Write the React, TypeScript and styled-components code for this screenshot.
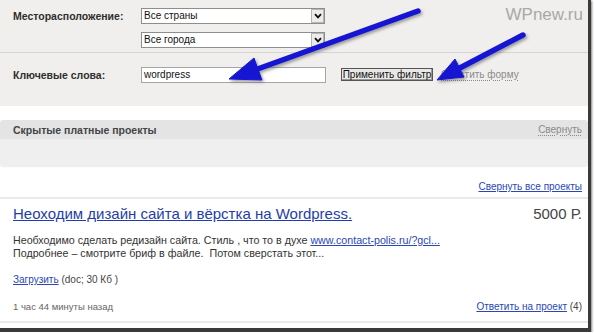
import styled, { createGlobalStyle } from 'styled-components';

const GlobalStyle = createGlobalStyle`
  body {
    margin: 0;
    background: #ffffff;
    font-family: 'Liberation Sans', Arial, sans-serif;
  }
`;

const ChevronIcon = () => (
  <svg width="8" height="6" viewBox="0 0 8 6">
    <path d="M1 1.2 L4 4.4 L7 1.2" fill="none" stroke="#111" strokeWidth="1.8" />
  </svg>
);

const Arrows = () => (
  <ArrowLayer width="588" height="330" viewBox="0 0 588 330">
    <defs>
      <filter id="shadow" x="-20%" y="-20%" width="140%" height="140%">
        <feDropShadow dx="1.5" dy="2" stdDeviation="1.5" floodColor="#555" floodOpacity="0.55" />
      </filter>
    </defs>
    <g filter="url(#shadow)" fill="#1414d2" stroke="#1414d2">
      <line x1="418" y1="11" x2="252" y2="71" strokeWidth="5.5" strokeLinecap="round" />
      <polygon points="229,79 254,58 262,80" strokeWidth="1" strokeLinejoin="round" />
      <line x1="523" y1="35" x2="456" y2="70" strokeWidth="5.5" strokeLinecap="round" />
      <polygon points="437,80 455,59 464,77" strokeWidth="1" strokeLinejoin="round" />
    </g>
  </ArrowLayer>
);

const App = () => {
  return (
    <>
      <GlobalStyle />
      <Frame>
        <Watermark>WPnew.ru</Watermark>
        <FilterPanel>
          <FilterGroup>
            <FilterRow>
              <Label>Месторасположение:</Label>
              <SelectBox>
                <span>Все страны</span>
                <SelectButton>
                  <ChevronIcon />
                </SelectButton>
              </SelectBox>
            </FilterRow>
            <FilterRow>
              <Label />
              <SelectBox>
                <span>Все города</span>
                <SelectButton>
                  <ChevronIcon />
                </SelectButton>
              </SelectBox>
            </FilterRow>
          </FilterGroup>
          <FilterGroup $divided>
            <FilterRow>
              <Label>Ключевые слова:</Label>
              <TextInput>wordpress</TextInput>
              <ApplyButton>Применить фильтр</ApplyButton>
              <GrayLink>Очистить форму</GrayLink>
            </FilterRow>
          </FilterGroup>
        </FilterPanel>

        <HiddenBox>
          <HiddenHeader>
            <HiddenTitle>Скрытые платные проекты</HiddenTitle>
            <GrayLink>Свернуть</GrayLink>
          </HiddenHeader>
          <HiddenBody />
        </HiddenBox>

        <CollapseRow>
          <BlueLink>Свернуть все проекты</BlueLink>
        </CollapseRow>

        <ProjectCard>
          <ProjectHead>
            <ProjectTitle>Неоходим дизайн сайта и вёрстка на Wordpress.</ProjectTitle>
            <Price>5000 Р.</Price>
          </ProjectHead>
          <Description>
            Необходимо сделать редизайн сайта. Стиль , что то в духе{' '}
            <BlueLink>www.contact-polis.ru/?gcl...</BlueLink>
            <br />
            Подробнее – смотрите бриф в файле.&nbsp; Потом сверстать этот...
          </Description>
          <Attachment>
            <BlueLink>Загрузить</BlueLink> (doc; 30 Кб )
          </Attachment>
          <ProjectFoot>
            <TimeAgo>1 час 44 минуты назад</TimeAgo>
            <Reply>
              <BlueLink>Ответить на проект</BlueLink> (4)
            </Reply>
          </ProjectFoot>
        </ProjectCard>
        <Arrows />
      </Frame>
    </>
  );
};

export default App;

const Frame = styled.div`
  position: relative;
  width: 591px;
  height: 332px;
  box-sizing: border-box;
  display: flex;
  flex-direction: column;
  background: #fff;
  border-right: 3px solid #3a3a3a;
  border-bottom: 4px solid #3a3a3a;
  box-shadow: 1px 1px 2px rgba(0, 0, 0, 0.5);
  overflow: hidden;
`;

const ArrowLayer = styled.svg`
  position: absolute;
  top: 0;
  left: 0;
  pointer-events: none;
`;

const Watermark = styled.div`
  position: absolute;
  top: 5px;
  right: 5px;
  font-family: 'Liberation Sans', Arial, sans-serif;
  font-size: 17px;
  color: #a8a8a8;
`;

const FilterPanel = styled.div`
  background: #f0efed;
  height: 106px;
  flex-shrink: 0;
  display: flex;
  flex-direction: column;
`;

const FilterGroup = styled.div<{ $divided?: boolean }>`
  display: flex;
  flex-direction: column;
  gap: 9px;
  padding: ${(p) => (p.$divided ? '14px 0 0 13px' : '8px 0 0 13px')};
  height: ${(p) => (p.$divided ? 'auto' : '52px')};
  border-top: ${(p) => (p.$divided ? '1px solid #d6d5d2' : 'none')};
  box-sizing: border-box;
`;

const FilterRow = styled.div`
  display: flex;
  align-items: center;
  height: 15px;
`;

const Label = styled.div`
  width: 128px;
  flex-shrink: 0;
  font-size: 10.5px;
  font-weight: bold;
  color: #2e2e2e;
`;

const SelectBox = styled.div`
  width: 184px;
  height: 16px;
  box-sizing: border-box;
  display: flex;
  align-items: center;
  justify-content: space-between;
  background: #fff;
  border: 1px solid #8e8e8e;
  padding-left: 2px;
  font-size: 10px;
  color: #111;
`;

const SelectButton = styled.div`
  width: 13px;
  height: 14px;
  box-sizing: border-box;
  display: flex;
  align-items: center;
  justify-content: center;
  background: #ececec;
  border: 1px solid #b5b5b5;
`;

const TextInput = styled.div`
  width: 185px;
  height: 16px;
  box-sizing: border-box;
  display: flex;
  align-items: center;
  background: #fff;
  border: 1px solid #a5a5a5;
  padding-left: 2px;
  font-size: 10px;
  color: #111;
`;

const ApplyButton = styled.div`
  margin-left: 15px;
  width: 92px;
  height: 13px;
  box-sizing: border-box;
  display: flex;
  align-items: center;
  justify-content: center;
  background: #e9e9e7;
  border: 1px solid #555;
  box-shadow: inset -1px -1px 0 #999;
  font-size: 10px;
  color: #111;
`;

const GrayLink = styled.span`
  margin-left: 8px;
  font-size: 10px;
  color: #8a8a8a;
  text-decoration: underline dotted;
  text-underline-offset: 2px;
`;

const HiddenBox = styled.div`
  margin-top: 14px;
  flex-shrink: 0;
  border-radius: 3px;
  overflow: hidden;
  box-shadow: 0 1px 1px rgba(0, 0, 0, 0.08);
`;

const HiddenHeader = styled.div`
  height: 19px;
  display: flex;
  align-items: center;
  justify-content: space-between;
  padding: 0 6px 0 13px;
  background: #e4e4e4;
`;

const HiddenTitle = styled.div`
  font-size: 10.5px;
  font-weight: bold;
  color: #444;
`;

const HiddenBody = styled.div`
  height: 27px;
  background: #efefef;
`;

const CollapseRow = styled.div`
  display: flex;
  justify-content: flex-end;
  flex-shrink: 0;
  padding: 15px 6px 0 0;
  height: 16px;
  font-size: 10px;
`;

const BlueLink = styled.span`
  color: #2a47b5;
  text-decoration: underline;
`;

const ProjectCard = styled.div`
  flex-shrink: 0;
  border-top: 2px solid #ebebeb;
  border-bottom: 2px solid #ebebeb;
  padding: 6px 6px 0 13px;
  height: 116px;
  display: flex;
  flex-direction: column;
`;

const ProjectHead = styled.div`
  display: flex;
  justify-content: space-between;
  align-items: baseline;
`;

const ProjectTitle = styled.div`
  font-size: 15px;
  color: #1f3ea8;
  text-decoration: underline;
`;

const Price = styled.div`
  font-size: 15px;
  color: #444;
`;

const Description = styled.div`
  margin-top: 12px;
  font-size: 10.7px;
  line-height: 13px;
  color: #333;
`;

const Attachment = styled.div`
  margin-top: 14px;
  font-size: 10px;
  color: #444;
`;

const ProjectFoot = styled.div`
  margin-top: 16px;
  display: flex;
  justify-content: space-between;
  align-items: baseline;
`;

const TimeAgo = styled.div`
  font-size: 9.5px;
  color: #666;
`;

const Reply = styled.div`
  font-size: 10px;
  color: #444;
`;
